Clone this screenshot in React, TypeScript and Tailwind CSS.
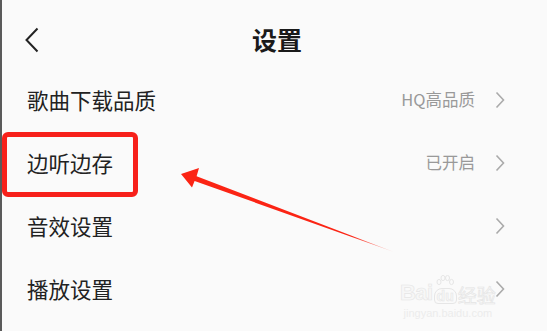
const rows = [
  { label: "歌曲下载品质", value: "HQ高品质" },
  { label: "边听边存", value: "已开启" },
  { label: "音效设置", value: "" },
  { label: "播放设置", value: "" },
];

const Chevron = ({ className = "" }: { className?: string }) => (
  <svg width="10" height="18" viewBox="0 0 10 18" className={className}>
    <path d="M1.5 1.5 L8.5 9 L1.5 16.5" fill="none" stroke="currentColor" strokeWidth="1.6" />
  </svg>
);

export default function App() {
  return (
    <div
      className="relative w-[547px] h-[331px] overflow-hidden bg-[#fafafa] border-l-2 border-[#5a5a5a]"
      style={{ fontFamily: '"Noto Sans CJK SC", "Noto Sans", sans-serif' }}
    >
      {/* header */}
      <div className="relative h-[68px] pt-[10px] flex items-center justify-center">
        <svg
          width="16"
          height="26"
          viewBox="0 0 16 26"
          className="absolute left-[22px] top-[27px] text-[#222]"
        >
          <path d="M13.5 1.5 L2.5 13 L13.5 24.5" fill="none" stroke="currentColor" strokeWidth="2" />
        </svg>
        <h1 className="ml-[5px] text-[25px] font-bold text-[#1a1a1a] leading-none">设置</h1>
      </div>

      {/* rows */}
      <div className="flex flex-col">
        {rows.map((r) => (
          <div key={r.label} className="h-[63px] flex items-center pl-[25px] pr-[42px]">
            <span className="text-[21.5px] text-[#222] leading-none">{r.label}</span>
            <span className="ml-auto text-[16.5px] text-[#999] leading-none mr-[20px]">{r.value}</span>
            <Chevron className="text-[#aaaaaa]" />
          </div>
        ))}
      </div>

      {/* red highlight box */}
      <div className="absolute left-0 top-[132px] w-[136px] h-[65px] border-[5px] border-[#f7201a] rounded-[6px]" />

      {/* arrow */}
      <svg className="absolute inset-0 pointer-events-none" width="547" height="331">
        <defs>
          <linearGradient id="fade" x1="179" y1="174" x2="392" y2="252" gradientUnits="userSpaceOnUse">
            <stop offset="0" stopColor="#fb2414" />
            <stop offset="0.8" stopColor="#fb2414" />
            <stop offset="1" stopColor="#fb2414" stopOpacity="0.2" />
          </linearGradient>
        </defs>
        <polygon
          points="179,174 197,168 194.6,176.2 392,252 192.6,181 190,187.5"
          fill="url(#fade)"
        />
      </svg>

      {/* watermark */}
      <div className="absolute left-[398px] top-[275px] flex flex-col items-center pointer-events-none select-none">
        <div className="flex items-end leading-none">
          <span
            className="text-[22px] font-bold text-[#f7f7f7] tracking-tight"
            style={{ fontFamily: '"Liberation Sans", sans-serif', WebkitTextStroke: "0.6px #e6e6e6" }}
          >
            Bai
          </span>
          <span className="relative mx-[1px] flex flex-col items-center">
            <svg width="20" height="14" viewBox="0 0 20 14" className="mb-[-1px]">
              <g fill="none" stroke="#e6e6e6" strokeWidth="1">
                <ellipse cx="4" cy="7" rx="2" ry="2.6" />
                <ellipse cx="8" cy="3" rx="2" ry="2.6" />
                <ellipse cx="12.5" cy="3" rx="2" ry="2.6" />
                <ellipse cx="16.5" cy="7" rx="2" ry="2.6" />
              </g>
            </svg>
            <span
              className="px-[2px] rounded-t-[8px] rounded-b-[4px] border border-[#e6e6e6] text-[14px] font-bold text-[#f7f7f7]"
              style={{ fontFamily: '"Liberation Sans", sans-serif', WebkitTextStroke: "0.5px #e4e4e4" }}
            >
              du
            </span>
          </span>
          <span className="text-[19px] text-[#f7f7f7]" style={{ WebkitTextStroke: "0.6px #e4e4e4" }}>
            经验
          </span>
        </div>
        <span
          className="mt-[4px] text-[11px] text-[#ececec] leading-none"
          style={{ fontFamily: '"Liberation Sans", sans-serif' }}
        >
          jingyan.baidu.com
        </span>
      </div>
    </div>
  );
}
